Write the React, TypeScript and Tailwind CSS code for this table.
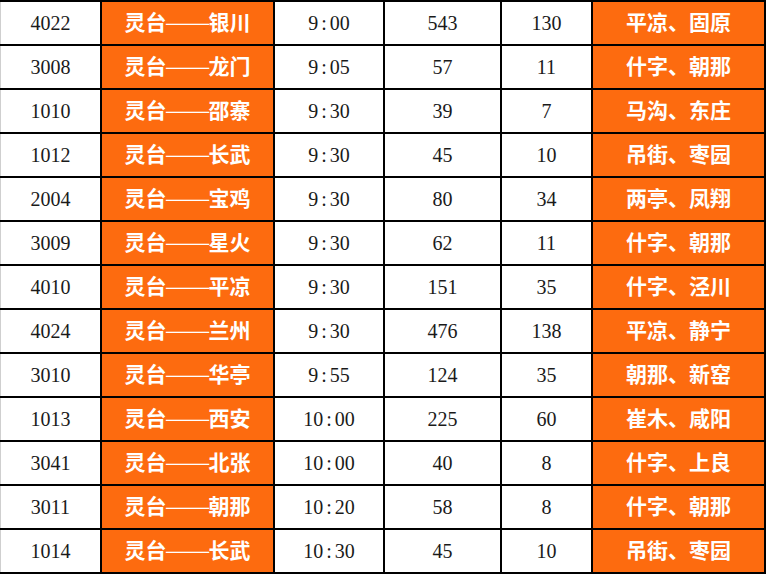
import React from "react";

const rows: [string, string, string, string, string, string][] = [
  ["4022", "银川", "9:00", "543", "130", "平凉、固原"],
  ["3008", "龙门", "9:05", "57", "11", "什字、朝那"],
  ["1010", "邵寨", "9:30", "39", "7", "马沟、东庄"],
  ["1012", "长武", "9:30", "45", "10", "吊街、枣园"],
  ["2004", "宝鸡", "9:30", "80", "34", "两亭、凤翔"],
  ["3009", "星火", "9:30", "62", "11", "什字、朝那"],
  ["4010", "平凉", "9:30", "151", "35", "什字、泾川"],
  ["4024", "兰州", "9:30", "476", "138", "平凉、静宁"],
  ["3010", "华亭", "9:55", "124", "35", "朝那、新窑"],
  ["1013", "西安", "10:00", "225", "60", "崔木、咸阳"],
  ["3041", "北张", "10:00", "40", "8", "什字、上良"],
  ["3011", "朝那", "10:20", "58", "8", "什字、朝那"],
  ["1014", "长武", "10:30", "45", "10", "吊街、枣园"],
];

const serif = "[font-family:'Liberation_Serif','Noto_Sans_CJK_SC',serif]";
const cjk = "[font-family:'Noto_Sans_CJK_SC',sans-serif]";

function Time({ t }: { t: string }) {
  const [h, m] = t.split(":");
  return (
    <span>
      {h}
      <span className="mx-[3px]">:</span>
      {m}
    </span>
  );
}

export default function App() {
  return (
    <div className="w-[766px] h-[574px] bg-black pt-[2px] pr-[2px] flex flex-col gap-[2px] overflow-hidden">
      {rows.map((r, i) => (
        <div
          key={i}
          className="grid grid-cols-[100px_171px_108px_115px_89px_171px] gap-x-[2px] h-[42px]"
        >
          <div className={`bg-white border-l border-[#cfcfcf] flex items-center justify-center text-[20px] text-[#1a1a1a] ${serif}`}>
            {r[0]}
          </div>
          <div className={`bg-[#fd6b0f] flex items-center justify-center pb-[3px] text-white font-bold text-[21px] ${cjk}`}>
            <span>灵台</span>
            <span className="inline-block w-[42px] text-center overflow-visible">
              <span className="inline-block scale-x-[1.3] font-normal">——</span>
            </span>
            <span>{r[1]}</span>
          </div>
          <div className={`bg-white flex items-center justify-center text-[20px] text-[#1a1a1a] ${serif}`}>
            <Time t={r[2]} />
          </div>
          <div className={`bg-white flex items-center justify-center text-[20px] text-[#1a1a1a] ${serif}`}>
            {r[3]}
          </div>
          <div className={`bg-white flex items-center justify-center text-[20px] text-[#1a1a1a] ${serif}`}>
            {r[4]}
          </div>
          <div className={`bg-[#fd6b0f] flex items-center justify-center pb-[3px] text-white font-bold text-[21px] ${cjk}`}>
            {r[5]}
          </div>
        </div>
      ))}
    </div>
  );
}
